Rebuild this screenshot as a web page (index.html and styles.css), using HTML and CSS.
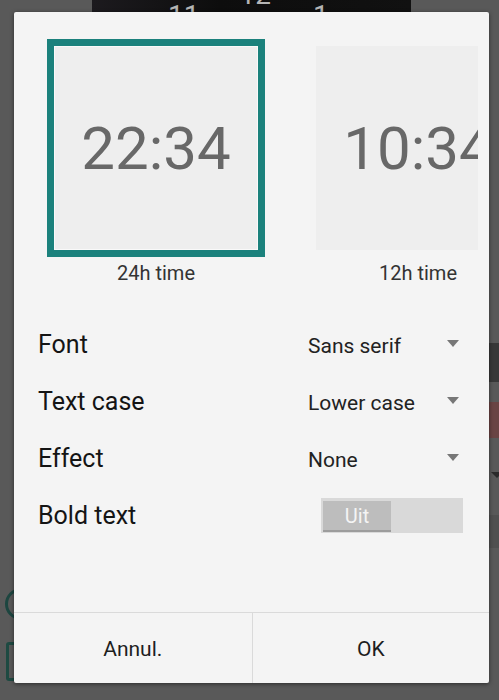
FILE: index.html
```html
<!DOCTYPE html>
<html lang="en">
<head>
    <meta charset="UTF-8">
    <meta name="viewport" content="width=device-width, initial-scale=1.0">
    <title>Clock style</title>
    <link rel="stylesheet" href="styles.css">
</head>
<body>
    <!-- app behind the dialog, dimmed -->
    <div class="backdrop">
        <div class="clock-strip">
            <span class="n11">11</span>
            <span class="n12">12</span>
            <span class="n1">1</span>
        </div>
        <div class="backdrop-body">
            <div class="bg-left">
                <div class="ring"></div>
                <div class="bracket"></div>
            </div>
            <div class="bg-right">
                <div class="bar-dark"></div>
                <div class="bar-red"></div>
                <div class="caret"></div>
                <div class="bar-shade"></div>
            </div>
        </div>
    </div>

    <div class="dialog">
        <div class="styles">
            <div class="style-item">
                <div class="tile selected">22:34</div>
                <div class="style-name">24h time</div>
            </div>
            <div class="style-item">
                <div class="tile">10:34</div>
                <div class="style-name">12h time</div>
            </div>
        </div>

        <div class="options">
            <div class="option">
                <span class="option-label">Font</span>
                <span class="spinner">Sans serif <i class="arrow"></i></span>
            </div>
            <div class="option">
                <span class="option-label">Text case</span>
                <span class="spinner">Lower case <i class="arrow"></i></span>
            </div>
            <div class="option">
                <span class="option-label">Effect</span>
                <span class="spinner">None <i class="arrow"></i></span>
            </div>
            <div class="option">
                <span class="option-label">Bold text</span>
                <span class="toggle"><span class="toggle-thumb">Uit</span></span>
            </div>
        </div>

        <div class="buttons">
            <button>Annul.</button>
            <button>OK</button>
        </div>
    </div>
</body>
</html>
```

FILE: styles.css
```css
body {
    margin: 0;
    height: 700px;
    overflow: hidden;
    background: #595959;
    font-family: 'Roboto', 'Liberation Sans', sans-serif;
}

/* backdrop */
.clock-strip {
    display: flex;
    align-items: flex-start;
    margin-left: 92px;
    width: 319px;
    height: 12px;
    overflow: hidden;
    background: linear-gradient(90deg, #1c1a1e, #0d0d0d 40%, #111 100%);
    color: #b5b5b5;
    font-size: 28px;
    line-height: 28px;
}
.n11 {
    margin: 2px 0 0 76px;
}
.n12 {
    margin: -19px 0 0 40px;
}
.n1 {
    margin: 2px 0 0 42px;
}
.backdrop-body {
    display: flex;
    justify-content: space-between;
}
.bg-left {
    width: 40px;
}
.ring {
    width: 26px;
    height: 26px;
    margin: 576px 0 0 5px;
    border: 3px solid #1d4640;
    border-radius: 50%;
}
.bracket {
    width: 26px;
    height: 33px;
    margin: 22px 0 0 6px;
    border: 3px solid #1e4a42;
    border-radius: 3px;
}
.bg-right {
    width: 10px;
}
.bar-dark {
    height: 39px;
    margin-top: 331px;
    background: #383838;
}
.bar-red {
    height: 36px;
    margin-top: 20px;
    background: #6a4444;
}
.caret {
    width: 0;
    height: 0;
    margin: 34px 0 0 2px;
    border-left: 6px solid transparent;
    border-right: 6px solid transparent;
    border-top: 6px solid #2a2a2a;
}
.bar-shade {
    height: 33px;
    margin-top: 37px;
    background: #505050;
}

/* dialog */
.dialog {
    position: absolute;
    top: 12px;
    left: 14px;
    width: 475px;
    height: 671px;
    display: flex;
    flex-direction: column;
    background: #f4f4f4;
    border-radius: 2px;
    box-shadow: 0 1px 4px rgba(0, 0, 0, 0.5);
}
.styles {
    display: flex;
    margin: 27px 11px 0;
    padding-top: 7px;
    overflow: hidden;
}
.style-item {
    flex: none;
    width: 262px;
}
.tile {
    width: 204px;
    height: 204px;
    margin: 0 auto;
    display: flex;
    align-items: center;
    justify-content: center;
    background: #eeeeee;
    color: #686868;
    font-size: 60px;
    white-space: nowrap;
}
.tile.selected {
    outline: 7px solid #1b817c;
    box-shadow: inset 0 0 0 1px #f9f9f9;
}
.style-name {
    margin-top: 11px;
    font-size: 20px;
    line-height: 24px;
    color: #333;
    text-align: center;
}
.options {
    margin-top: 31px;
    padding: 0 26px 0 24px;
}
.option {
    display: grid;
    grid-template-columns: 1fr 155px;
    align-items: center;
    height: 57px;
}
.option-label {
    font-size: 25px;
    line-height: 57px;
    color: #141414;
}
.spinner {
    display: flex;
    align-items: center;
    justify-content: space-between;
    padding: 3px 4px 0 0;
    font-size: 21px;
    color: #222;
}
.arrow {
    width: 0;
    height: 0;
    margin-top: -6px;
    border-left: 6.5px solid transparent;
    border-right: 6.5px solid transparent;
    border-top: 7.5px solid #777;
}
.toggle {
    justify-self: end;
    width: 140px;
    height: 31px;
    padding: 3px 0 1px 2px;
    background: #d9d9d9;
}
.toggle-thumb {
    display: block;
    width: 68px;
    height: 29px;
    background: #bdbdbd;
    border-bottom: 2px solid #9c9c9c;
    color: #f4f4f4;
    font-size: 20px;
    line-height: 30px;
    text-align: center;
}
.buttons {
    margin-top: auto;
    display: grid;
    grid-template-columns: 1fr 1fr;
    height: 70px;
    border-top: 1px solid #dadada;
}
.buttons button {
    border: none;
    background: none;
    font-family: 'Roboto', 'Liberation Sans', sans-serif;
    font-size: 21px;
    color: #1e1e1e;
    padding: 2px 0 0;
}
.buttons button + button {
    border-left: 1px solid #dadada;
}
```
